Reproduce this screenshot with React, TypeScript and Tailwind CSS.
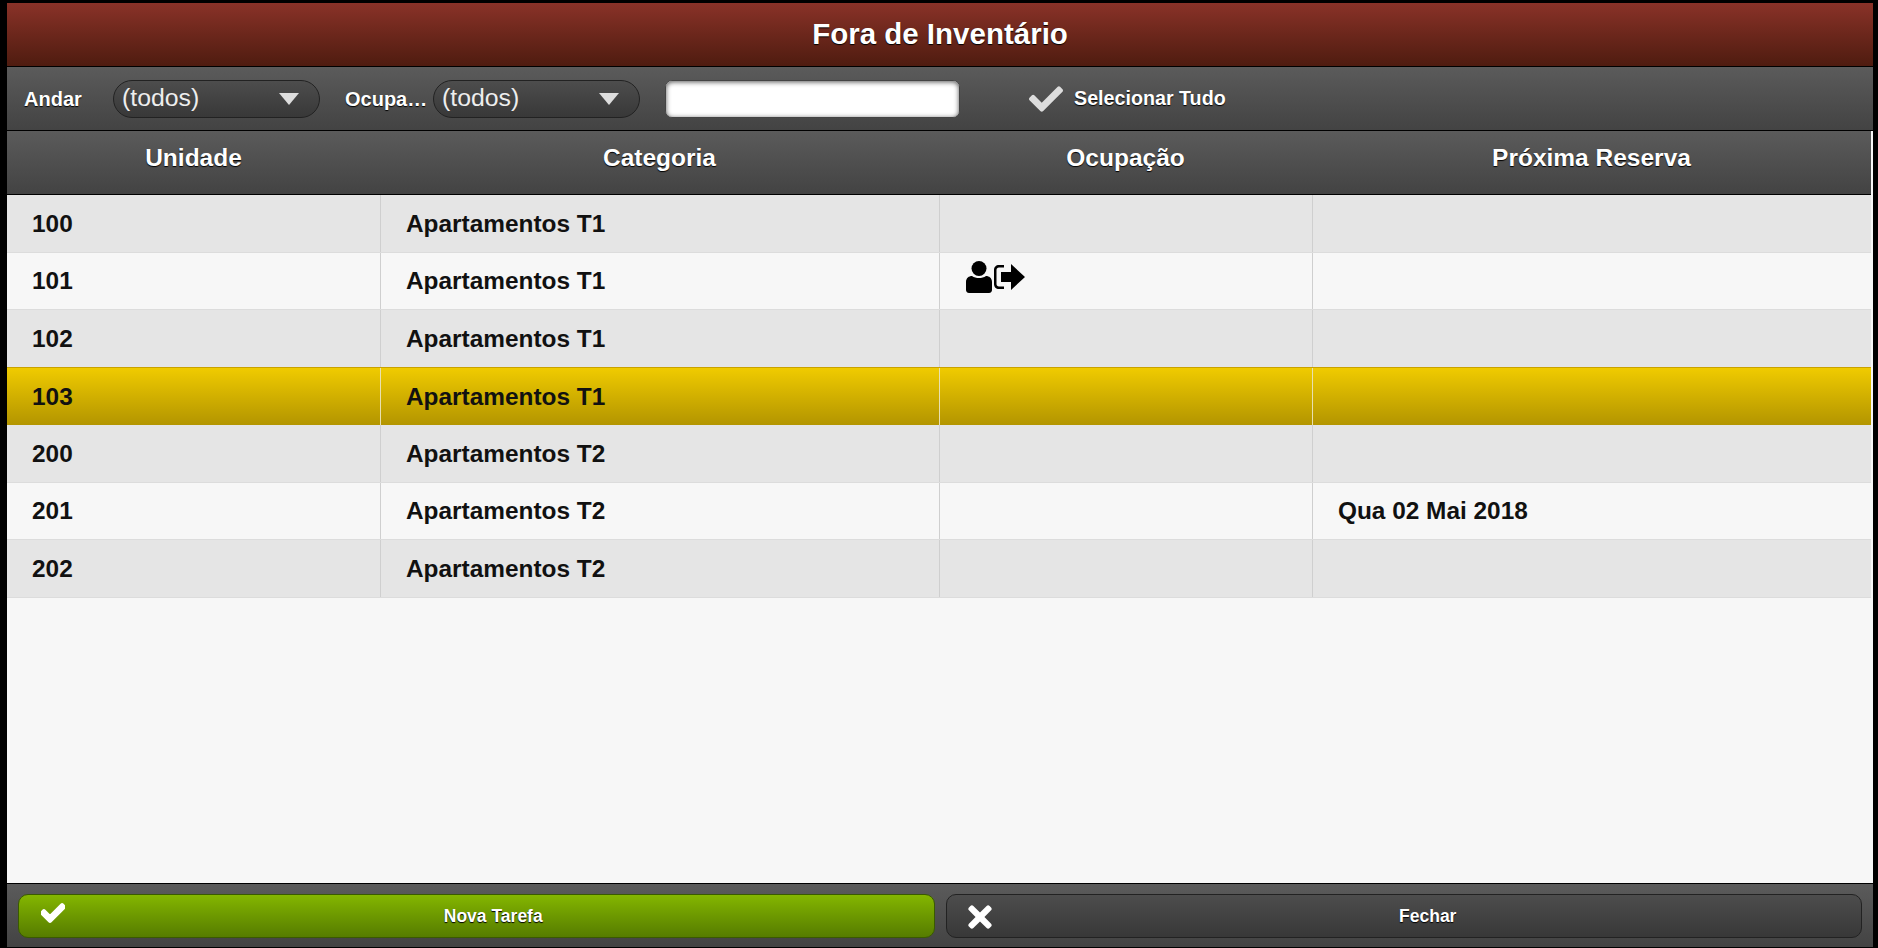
import React from 'react';
import { FaCheck, FaTimes } from 'react-icons/fa';

interface RoomRow {
    unit: string;
    category: string;
    occupied?: boolean;
    nextBooking?: string;
    selected?: boolean;
}

const rows: RoomRow[] = [
    { unit: '100', category: 'Apartamentos T1' },
    { unit: '101', category: 'Apartamentos T1', occupied: true },
    { unit: '102', category: 'Apartamentos T1' },
    { unit: '103', category: 'Apartamentos T1', selected: true },
    { unit: '200', category: 'Apartamentos T2' },
    { unit: '201', category: 'Apartamentos T2', nextBooking: 'Qua 02 Mai 2018' },
    { unit: '202', category: 'Apartamentos T2' },
];

const barClass = 'bg-gradient-to-b from-[#5b5b5b] to-[#434343]';
const gridClass = 'grid grid-cols-[373px_559px_373px_559px]';

const OccupiedIcon = () => (
    <svg width="60" height="34" viewBox="0 0 60 34" fill="currentColor">
        <circle cx="14" cy="8.5" r="7.5" />
        <path d="M1 30v-8c0-4 3-6 6-6 2 1.500 4.500 2 7 2s5-.5 7-2c3 0 6 2 6 6v8c0 1.500-1 3-3 3H4c-2 0-3-1.500-3-3z" />
        <path d="M39 5h-5c-3 0-5 2-5 5v14c0 3 2 5 5 5h5v-2.500h-5c-1.500 0-2.500-1-2.500-2.500V10c0-1.500 1-2.500 2.500-2.500h5z" />
        <path d="M36 12h10V4l14 13-14 13v-8H36z" />
    </svg>
);

const FilterSelect = () => (
    <div className="flex h-[38px] w-[207px] items-center justify-between rounded-full border border-[#222] bg-gradient-to-b from-[#4d4d4d] to-[#383838] pl-[8px] pr-[20px] text-[24.8px] text-[#eee]">
        <span className="pb-[2px]">(todos)</span>
        <span className="h-0 w-0 border-x-[10px] border-t-[12px] border-x-transparent border-t-[#ddd]"></span>
    </div>
);

const App: React.FC = () => {
    return (
        <div className="flex h-[948px] flex-col bg-black pb-px pl-[7px] pr-[5px] pt-[3px] font-['Liberation_Sans',Arial,sans-serif]">
            {/* Title */}
            <div className="flex h-[63px] shrink-0 items-center justify-center bg-gradient-to-b from-[#8a3228] to-[#4f1c10] text-[29.5px] font-bold text-white [text-shadow:0_1px_1px_#000]">
                Fora de Inventário
            </div>

            {/* Filters */}
            <div className={`mt-px flex h-[63px] shrink-0 items-center ${barClass}`}>
                <span className="ml-[17px] w-[89px] text-[20px] font-bold text-white [text-shadow:0_1px_1px_#000]">Andar</span>
                <FilterSelect />
                <span className="ml-[25px] w-[88px] whitespace-nowrap text-[20px] font-bold text-white [text-shadow:0_1px_1px_#000]">Ocupa…</span>
                <FilterSelect />
                <input className="ml-[25px] h-[38px] w-[295px] rounded-[7px] border border-[#444] bg-white shadow-[inset_0_1px_5px_#555]" />
                <FaCheck className="ml-[69px] text-[#ddd]" size={34} />
                <span className="ml-[11px] text-[19.7px] font-bold text-white [text-shadow:0_1px_1px_#000]">Selecionar Tudo</span>
            </div>

            {/* Table header */}
            <div className="mt-px shrink-0 bg-[#f7f7f7] pr-[2px]">
                <div className={`h-[64px] items-center ${gridClass} ${barClass} border-b border-black pb-[9px] text-center text-[24.5px] font-bold text-white [text-shadow:0_1px_1px_#000]`}>
                    <div>Unidade</div>
                    <div>Categoria</div>
                    <div>Ocupação</div>
                    <div>Próxima Reserva</div>
                </div>
            </div>

            {/* Rows */}
            <div className="flex min-h-0 flex-1 flex-col bg-[#f7f7f7] pr-[2px] text-[24.4px] font-bold text-[#111]">
                {rows.map((row, index) => {
                    const bg = row.selected
                        ? '-mt-px h-[58.5px] bg-gradient-to-b from-[#f0cb00] to-[#b39500] border-t border-[#c9a200]'
                        : index % 2 === 0
                          ? 'h-[57.5px] bg-[#e5e5e5] border-b border-[#dcdcdc]'
                          : 'h-[57.5px] bg-[#f7f7f7] border-b border-[#dcdcdc]';
                    const divider = row.selected ? 'border-l border-[#e8e0b0]' : 'border-l border-[#cfcfcf]';
                    return (
                        <div key={row.unit} className={`${gridClass} items-stretch ${bg}`}>
                            <div className="flex items-center pl-[25px] pt-[2px]">{row.unit}</div>
                            <div className={`flex items-center pl-[25px] pt-[2px] ${divider}`}>{row.category}</div>
                            <div className={`flex items-center pb-[7px] pl-[25px] text-black ${divider}`}>
                                {row.occupied && <OccupiedIcon />}
                            </div>
                            <div className={`flex items-center pl-[25px] pt-[2px] ${divider}`}>{row.nextBooking}</div>
                        </div>
                    );
                })}
            </div>

            {/* Footer */}
            <div className={`grid h-[64px] shrink-0 grid-cols-2 gap-[11px] border-t border-black px-[11px] pb-[9px] pt-[10px] ${barClass} text-[17.5px] font-bold text-white`}>
                <button className="relative flex items-center justify-center rounded-[10px] border border-[#3a5a00] bg-gradient-to-b from-[#84b600] to-[#567c00] pl-[34px] [text-shadow:0_1px_1px_#000]">
                    <FaCheck className="absolute left-[22px] top-[6px] stroke-[40px]" size={24} stroke="currentColor" />
                    Nova Tarefa
                </button>
                <button className="relative flex items-center justify-center rounded-[10px] border border-[#222] bg-gradient-to-b from-[#4d4d4d] to-[#383838] pl-[48px] [text-shadow:0_1px_1px_#000]">
                    <FaTimes className="absolute left-[16px] top-[5px]" size={34} />
                    Fechar
                </button>
            </div>
        </div>
    );
};

export default App;
